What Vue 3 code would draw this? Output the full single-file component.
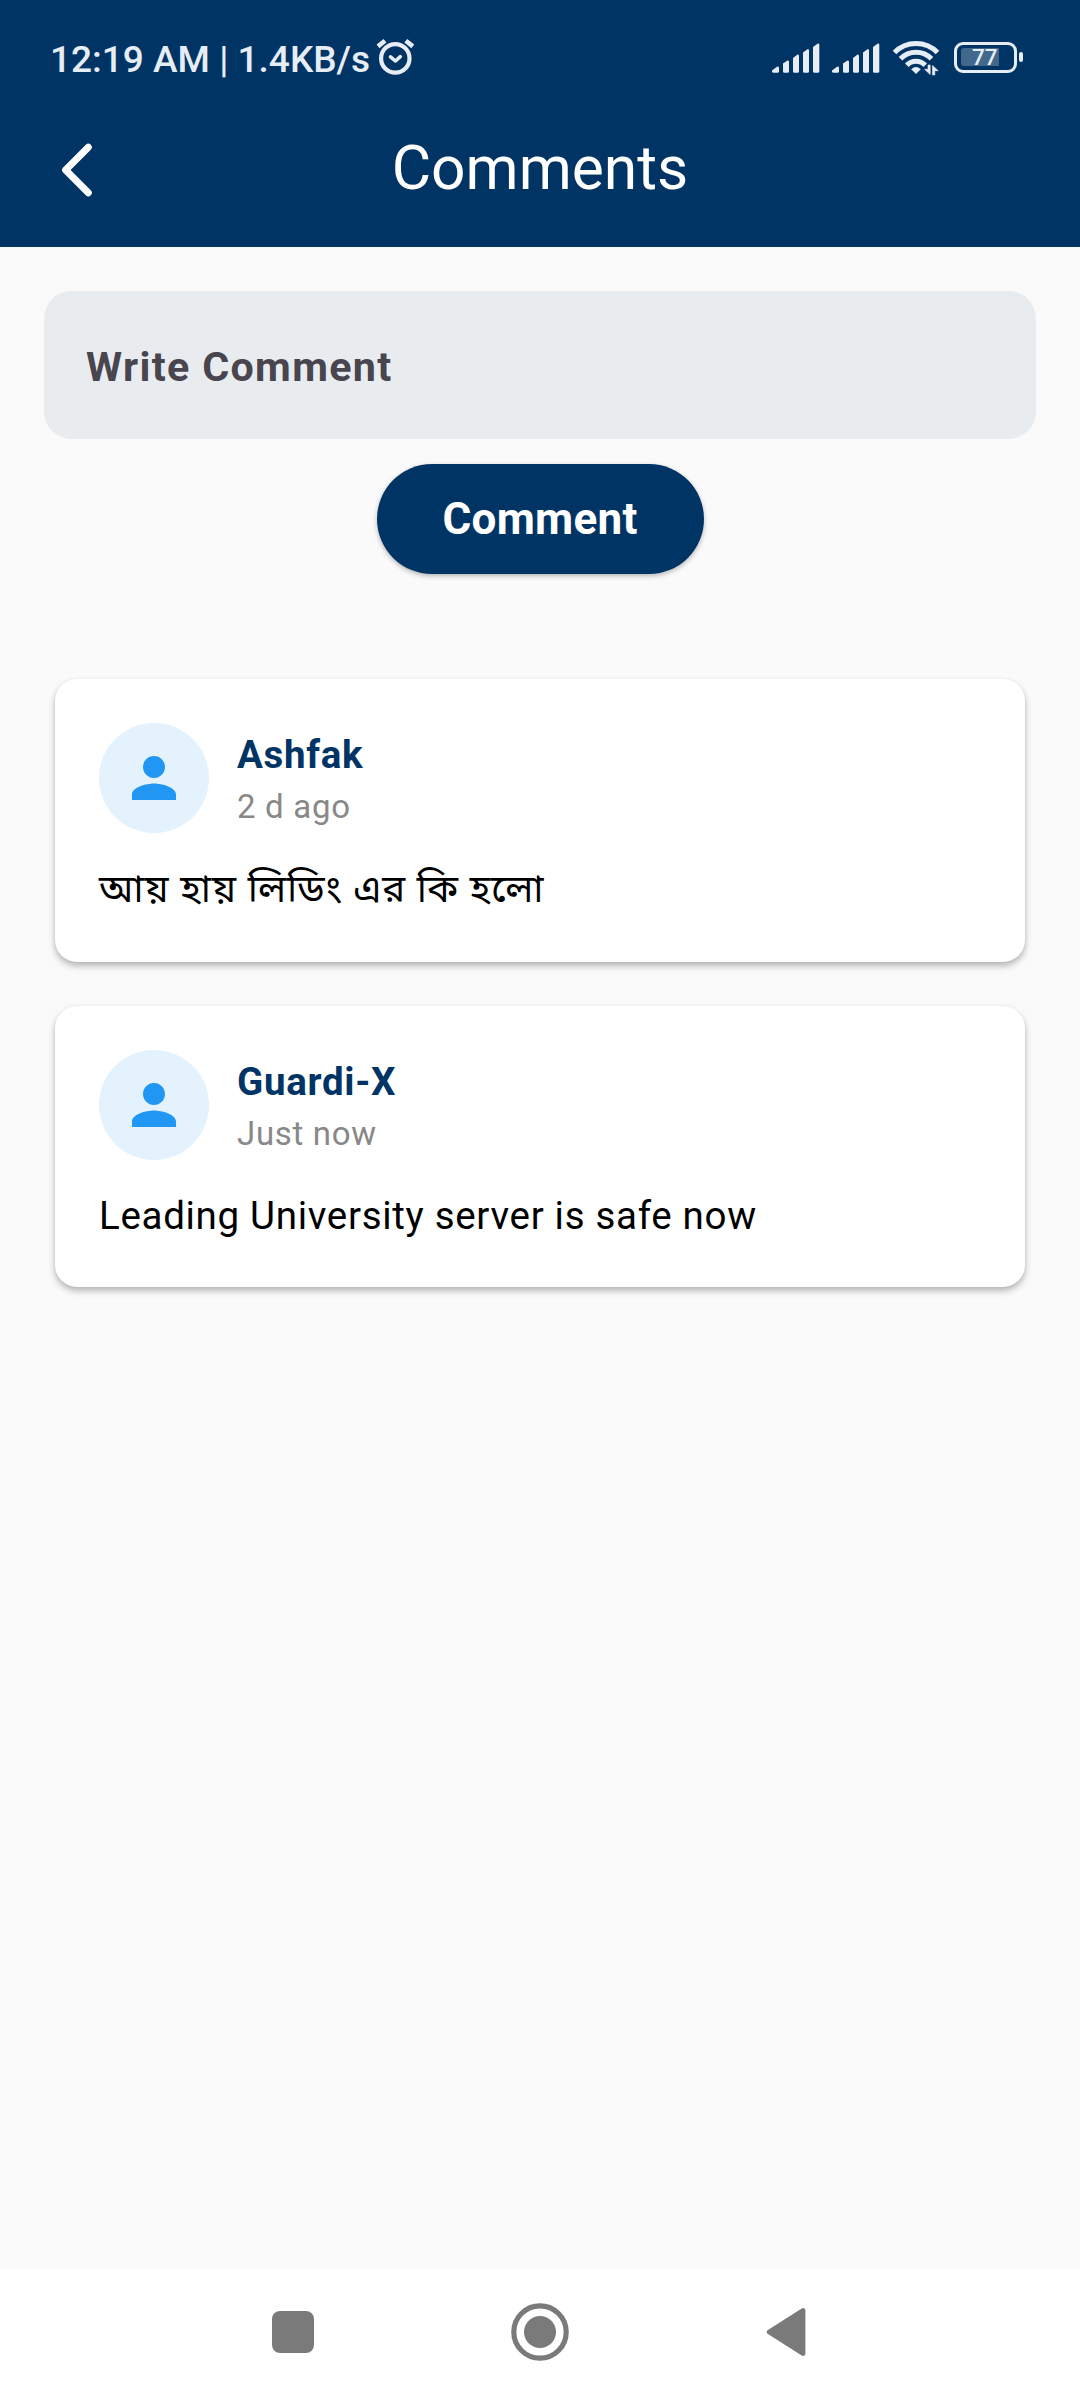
<script setup>
const signals = [0, 1]
const comments = [
  { name: 'Ashfak', time: '2 d ago', text: 'আয় হায় লিডিং এর কি হলো', lang: 'bn' },
  { name: 'Guardi-X', time: 'Just now', text: 'Leading University server is safe now', lang: 'en' },
]
</script>

<template>
  <div class="screen">
    <header class="top">
      <div class="status">
        <span class="clock">12:19 AM | 1.4KB/s</span>
        <svg class="alarm" width="42" height="40" viewBox="374 38 42 40" fill="none" stroke="#e6edf5" stroke-linecap="round" stroke-linejoin="round">
          <circle cx="395.3" cy="58.4" r="14.2" stroke-width="4.2" />
          <path d="M378 46.4L385 40.800M412.8 46.4L405.800 40.800" stroke-width="4.6" stroke-linecap="butt" />
          <path d="M390.500 56.800L395.4 61L400.300 56.6" stroke-width="3.6" />
        </svg>
        <span class="spacer"></span>
        <svg v-for="s in signals" :key="s" class="signal" width="48" height="32" viewBox="0 0 48 32" fill="#e6edf5">
          <path d="M0 28.5L5 24.8Q7 23.8 7 26V29.2Q7 30.7 5.500 30.700H1.500Q0 30.700 0 29.200Z" />
          <path d="M11 21.500L15.500 18.600Q17 18 17 20V29.200Q17 30.700 15.500 30.700H12.500Q11 30.700 11 29.200Z" />
          <path d="M21 16L25.500 12.600Q27 12 27 14V29.200Q27 30.700 25.500 30.700H22.500Q21 30.700 21 29.200Z" />
          <path d="M31 10.500L35.500 7.200Q37 6.600 37 8.600V29.200Q37 30.700 35.500 30.700H32.500Q31 30.700 31 29.200Z" />
          <path d="M41 5L45.500 1.700Q47.300 1 47.300 3V29.200Q47.300 30.700 45.800 30.700H42.500Q41 30.700 41 29.200Z" />
        </svg>
        <svg class="wifi" width="48" height="38" viewBox="892 38 48 38" fill="none" stroke="#e6edf5" stroke-width="5">
          <path d="M894.500 52.500A30 30 0 0 1 937.500 52.500" />
          <path d="M900.500 58.800A21.500 21.500 0 0 1 931.500 58.800" />
          <path d="M906.800 65.300A12.600 12.600 0 0 1 925.200 65.300" />
          <path d="M916 74L911.200 69.200Q916 64.600 920.800 69.200Z" fill="#e6edf5" stroke="none" />
          <path d="M930.200 65V74.500L924.600 69.300H928V65ZM932.500 75V65.500L938.200 70.700H934.800V75Z" fill="#e6edf5" stroke="#e6edf5" stroke-width="0.6" />
        </svg>
        <div class="battery">
          <div class="shell"><div class="level"></div><span class="percent">77</span></div>
          <div class="nub"></div>
        </div>
      </div>
      <div class="bar">
        <svg class="back" width="36" height="56" viewBox="0 0 36 56" fill="none" stroke="#fff" stroke-width="7" stroke-linecap="round" stroke-linejoin="round">
          <path d="M28.300 5.300L5.600 28L28.300 50.700" />
        </svg>
        <h1 class="title">Comments</h1>
      </div>
    </header>

    <main class="body">
      <div class="field">Write Comment</div>
      <button class="send">Comment</button>
      <section class="list">
        <article v-for="c in comments" :key="c.name" class="card">
          <div class="head">
            <div class="avatar">
              <svg width="66" height="66" viewBox="0 0 24 24" fill="#2196f3">
                <path d="M12 12c2.210 0 4-1.790 4-4s-1.790-4-4-4-4 1.790-4 4 1.790 4 4 4zm0 2c-2.670 0-8 1.340-8 4v2h16v-2c0-2.660-5.330-4-8-4z" />
              </svg>
            </div>
            <div class="who">
              <div class="name">{{ c.name }}</div>
              <div class="time">{{ c.time }}</div>
            </div>
          </div>
          <p class="text" :class="c.lang" :lang="c.lang">{{ c.text }}</p>
        </article>
      </section>
    </main>

    <nav class="nav">
      <svg width="42" height="42" viewBox="0 0 42 42"><rect width="42" height="42" rx="8" fill="#7a7a7a" /></svg>
      <svg class="home" width="58" height="58" viewBox="0 0 58 58">
        <circle cx="29" cy="29" r="26.200" fill="none" stroke="#7a7a7a" stroke-width="5.200" />
        <circle cx="29" cy="29" r="16" fill="#7a7a7a" />
      </svg>
      <svg width="40" height="50" viewBox="0 0 40 50">
        <path d="M37 3.500V46.500L3.200 25Z" fill="#7a7a7a" stroke="#7a7a7a" stroke-width="4.800" stroke-linejoin="round" />
      </svg>
    </nav>
  </div>
</template>

<style>
body { margin: 0; background: #fafafa; }
</style>

<style scoped>
.screen {
  width: 1080px;
  height: 2400px;
  display: flex;
  flex-direction: column;
  background: #fafafa;
  font-family: Roboto, "Noto Sans", sans-serif;
  overflow: hidden;
}
.top { height: 247px; flex: none; background: #003464; }
.status {
  height: 90px;
  box-sizing: border-box;
  padding: 29px 57px 0 50px;
  display: flex;
  align-items: center;
  color: #e6edf5;
}
.clock { font-size: 37px; font-weight: 500; line-height: 44px; white-space: pre; width: 324px; }
.alarm { margin-top: -3px; }
.spacer { flex: 1; }
.signal { margin: -4px 12px 0 0; }
.wifi { margin: -5px 14px 0 0; }
.battery { display: flex; align-items: center; gap: 2px; margin-top: -5px; }
.shell {
  width: 63px;
  height: 31px;
  box-sizing: border-box;
  border: 3px solid #e6edf5;
  border-radius: 9px;
  display: grid;
  align-items: center;
  padding: 0 4px;
}
.level { grid-area: 1 / 1; width: 38px; height: 18px; background: #42688c; border-radius: 3px 0 0 3px; }
.percent { grid-area: 1 / 1; padding-left: 11px; font-size: 22.500px; line-height: 25px; font-weight: 500; }
.nub { width: 4px; height: 10px; border-radius: 2px; background: #e6edf5; }
.bar {
  height: 157px;
  display: grid;
  grid-template-columns: 120px 1fr 120px;
  align-items: center;
}
.back { margin: 3px 0 0 60px; }
.title { margin: 0; text-align: center; color: #fff; font-weight: 400; font-size: 60.500px; line-height: 72px; }
.body { flex: 1; padding: 44px 44px 0; display: flex; flex-direction: column; }
.field {
  height: 148px;
  box-sizing: border-box;
  padding: 4px 42px 0;
  border-radius: 27.500px;
  background: #e8ecef;
  display: flex;
  align-items: center;
  color: #49454f;
  font-size: 41.250px;
  font-weight: 700;
  letter-spacing: 1.33px;
}
.send {
  align-self: center;
  margin: 25px 0 105px;
  width: 327px;
  height: 110px;
  padding: 0;
  border: 0;
  border-radius: 55px;
  background: #003464;
  color: #fff;
  font: 700 44px/52px Roboto, sans-serif;
  letter-spacing: 0.275px;
  box-shadow: 0 2px 5px rgba(0, 0, 0, 0.28);
}
.list { padding: 0 11px; display: flex; flex-direction: column; gap: 44px; }
.card {
  padding: 44px;
  border-radius: 22px;
  background: #fff;
  box-shadow: 0 4px 7px rgba(0, 0, 0, 0.26), 0 1px 4px rgba(0, 0, 0, 0.06);
}
.head { display: flex; align-items: center; gap: 28px; }
.avatar {
  width: 110px;
  height: 110px;
  border-radius: 50%;
  background: #e3f2fd;
  display: flex;
  align-items: center;
  justify-content: center;
}
.name { font-size: 38.500px; line-height: 55px; font-weight: 700; color: #003464; letter-spacing: 0.6875px; }
.time { margin-top: 2.750px; font-size: 33px; line-height: 44px; color: #888; letter-spacing: 0.6875px; }
.text { margin: 28px 0 -0.5px; font-size: 38.500px; line-height: 55px; color: #000; letter-spacing: 0.6875px; white-space: nowrap; }
.bn {
  margin: 31px 0 -4px;
  font-family: "Noto Sans Bengali", Roboto, "Noto Sans", sans-serif;
  line-height: 58px;
  letter-spacing: 0.85px;
}
.nav {
  height: 130px;
  flex: none;
  box-sizing: border-box;
  padding: 0 274px 6px 272px;
  background: #fff;
  display: flex;
  align-items: center;
  justify-content: space-between;
}
</style>
